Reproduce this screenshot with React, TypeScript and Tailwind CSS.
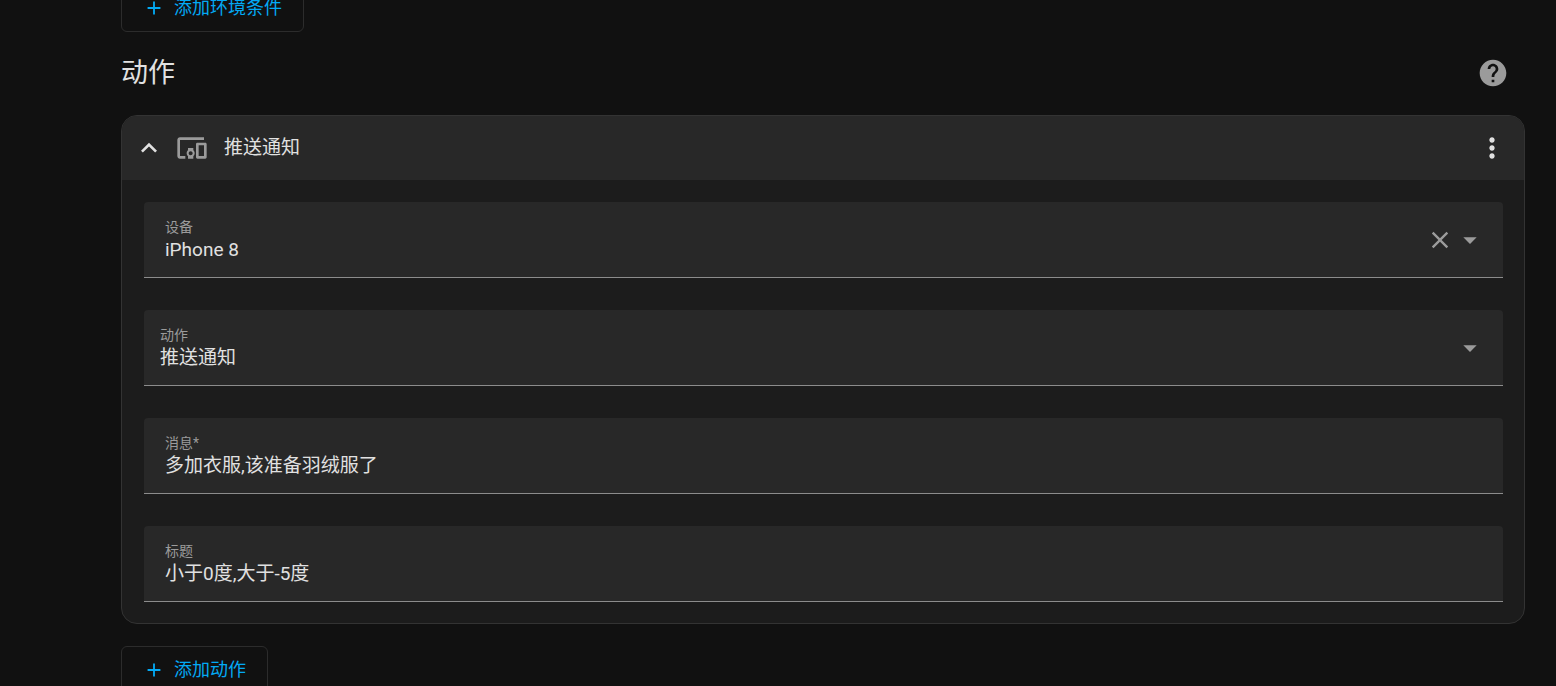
import { useState } from 'react'
import {
  MdAdd,
  MdArrowDropDown,
  MdClose,
  MdDevicesOther,
  MdHelp,
  MdKeyboardArrowUp,
  MdMoreVert,
} from 'react-icons/md'

const fieldBox =
  'h-19 w-full rounded-t border-b border-[#8c8c8c] bg-[#282828]'
const labelText = 'mb-px block text-sm leading-5 text-[#9b9b9b]'
const valueText =
  'block w-full bg-transparent text-[19px] leading-6 text-[#e1e1e1] outline-none'

interface TextFieldProps {
  id: string
  label: string
  value: string
  onChange: (value: string) => void
}

function TextField({ id, label, value, onChange }: TextFieldProps) {
  return (
    <div className={`${fieldBox} flex items-center px-[21px]`}>
      <div className="flex-1">
        <label htmlFor={id} className={labelText}>
          {label}
        </label>
        <input
          id={id}
          type="text"
          value={value}
          onChange={(e) => onChange(e.target.value)}
          className={valueText}
        />
      </div>
    </div>
  )
}

function AddButton({ children }: { children: string }) {
  return (
    <button
      type="button"
      className="flex h-12 items-center gap-[9px] rounded-md border border-[#2c2c2c] px-[21px] text-lg text-[#03a9f4]"
    >
      <MdAdd className="size-[22px]" />
      {children}
    </button>
  )
}

export default function App() {
  const [device, setDevice] = useState('iPhone 8')
  const [action, setAction] = useState('notify')
  const [message, setMessage] = useState('多加衣服,该准备羽绒服了')
  const [title, setTitle] = useState('小于0度,大于-5度')
  const [open, setOpen] = useState(true)

  return (
    <div className="h-screen overflow-hidden bg-[#111111] font-[Roboto,'Noto_Sans_CJK_SC',sans-serif] text-[#e1e1e1]">
      <main className="-mt-4 pr-[31px] pl-[121px]">
        <AddButton>添加环境条件</AddButton>

        {/* Section header */}
        <div className="flex h-[83px] items-center justify-between pr-4 pb-px">
          <h2 className="text-[27px] leading-9">动作</h2>
          <a href="#help" aria-label="帮助" className="text-[#9b9b9b]">
            <MdHelp className="size-8" />
          </a>
        </div>

        {/* Action card */}
        <section className="overflow-hidden rounded-2xl border border-[#333333] bg-[#1c1c1c]">
          <header className="flex h-16 items-center bg-[#282828] pr-4 pl-[11px]">
            <button
              type="button"
              aria-label="展开或收起"
              aria-expanded={open}
              onClick={() => setOpen(!open)}
            >
              <MdKeyboardArrowUp className="size-8" />
            </button>
            <MdDevicesOther className="ml-[11px] size-8 text-[#9b9b9b]" />
            <h3 className="ml-4 flex-1 text-[19px] leading-6">推送通知</h3>
            <button type="button" aria-label="更多">
              <MdMoreVert className="size-8" />
            </button>
          </header>

          {open && (
            <div className="flex flex-col gap-8 pt-[22px] pr-[21px] pb-[21px] pl-[22px]">
              <div className={`${fieldBox} flex items-center pr-[17px] pl-[21px]`}>
                <div className="flex-1">
                  <label htmlFor="device" className={labelText}>
                    设备
                  </label>
                  <input
                    id="device"
                    type="text"
                    role="combobox"
                    aria-expanded={false}
                    value={device}
                    onChange={(e) => setDevice(e.target.value)}
                    className={valueText}
                  />
                </div>
                <button
                  type="button"
                  aria-label="清除"
                  onClick={() => setDevice('')}
                  className="text-[#9b9b9b]"
                >
                  <MdClose className="size-7" />
                </button>
                <button type="button" aria-label="打开" className="text-[#9b9b9b]">
                  <MdArrowDropDown className="size-8" />
                </button>
              </div>

              <div className={`${fieldBox} grid items-center pr-[17px] pl-4`}>
                <div className="col-start-1 row-start-1">
                  <label htmlFor="action" className={labelText}>
                    动作
                  </label>
                  <select
                    id="action"
                    value={action}
                    onChange={(e) => setAction(e.target.value)}
                    className={`${valueText} appearance-none`}
                  >
                    <option value="notify">推送通知</option>
                  </select>
                </div>
                <MdArrowDropDown className="pointer-events-none col-start-1 row-start-1 size-8 justify-self-end text-[#9b9b9b]" />
              </div>

              <TextField id="message" label="消息*" value={message} onChange={setMessage} />
              <TextField id="title" label="标题" value={title} onChange={setTitle} />
            </div>
          )}
        </section>

        <div className="mt-[22px]">
          <AddButton>添加动作</AddButton>
        </div>
      </main>
    </div>
  )
}
